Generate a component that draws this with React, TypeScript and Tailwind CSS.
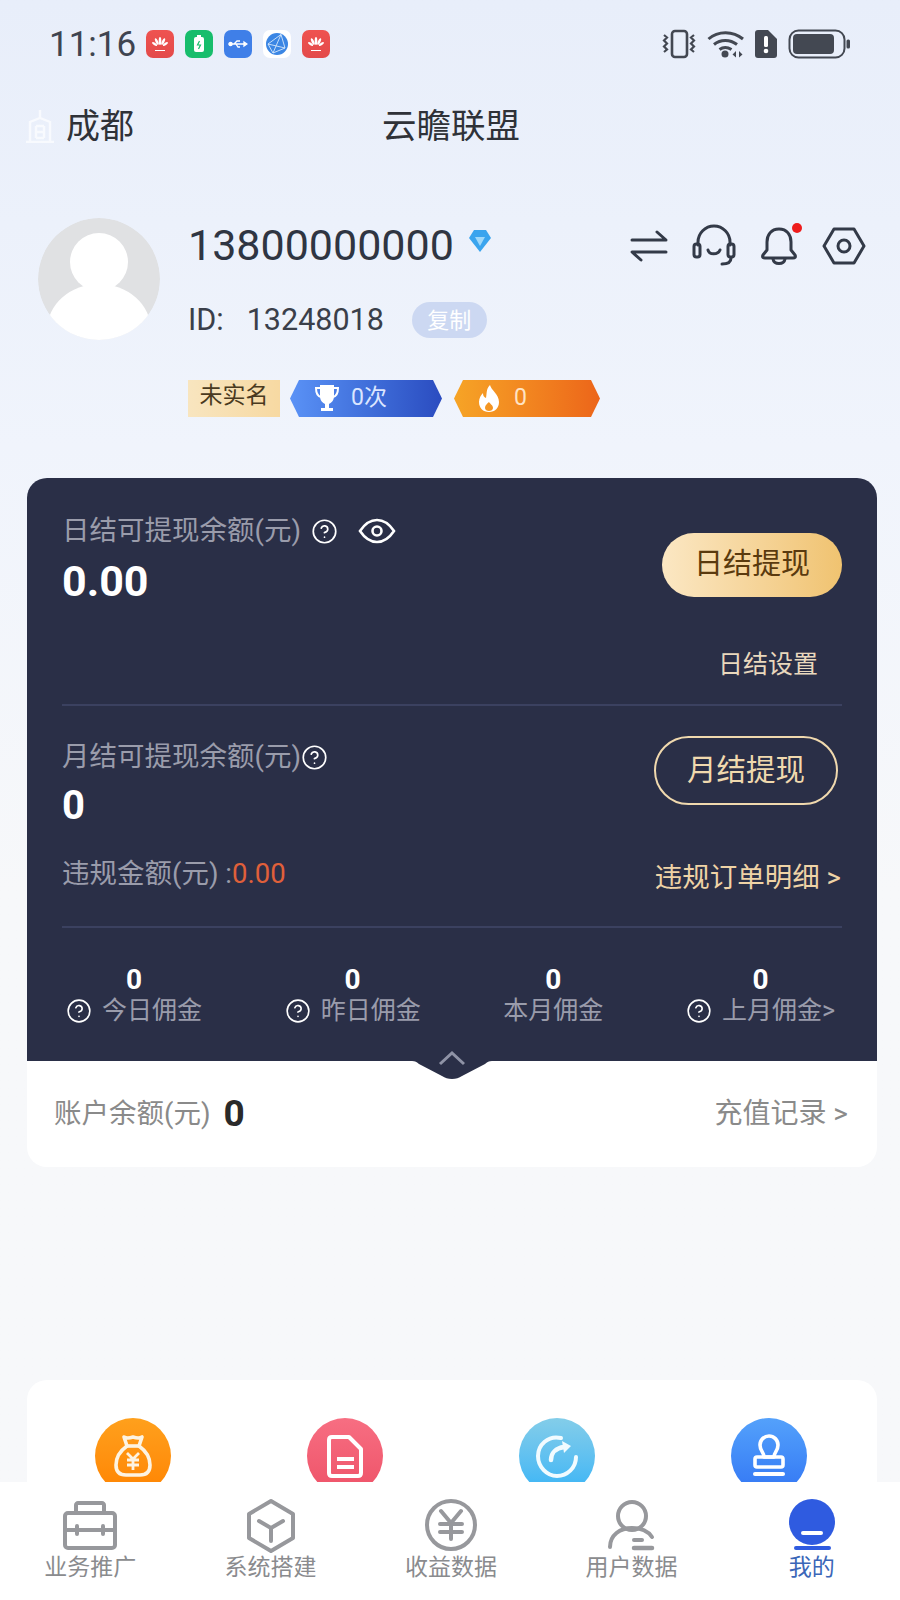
import { CircleHelp } from "lucide-react";

const Huawei = () => (
  <div className="w-[28px] h-[28px] rounded-[7px] bg-gradient-to-b from-[#ef5350] to-[#e34a4a] flex items-center justify-center">
    <svg width="20" height="20" viewBox="0 0 20 20" fill="#ffffff">
      <ellipse cx="10" cy="7" rx="1.3" ry="4" />
      <ellipse cx="6.8" cy="7.6" rx="1.3" ry="3.6" transform="rotate(-25 6.8 7.6)" />
      <ellipse cx="13.2" cy="7.6" rx="1.3" ry="3.6" transform="rotate(25 13.2 7.6)" />
      <ellipse cx="4.6" cy="10" rx="1.2" ry="3" transform="rotate(-55 4.6 10)" />
      <ellipse cx="15.4" cy="10" rx="1.2" ry="3" transform="rotate(55 15.4 10)" />
      <rect x="5" y="16" width="10" height="1" />
    </svg>
  </div>
);

const StatusApps = () => (
  <div className="flex gap-[11px] ml-[10px]">
    <Huawei />
    <div className="w-[28px] h-[28px] rounded-[7px] bg-[#17bd6c] flex items-center justify-center">
      <svg width="12" height="18" viewBox="0 0 12 18">
        <rect x="1" y="2" width="10" height="15" rx="2" fill="#ffffff" />
        <rect x="4" y="0" width="4" height="2" fill="#ffffff" />
        <path d="M6.5 6 4.5 10h3l-2 4" stroke="#17bd6c" strokeWidth="1.2" fill="none" />
      </svg>
    </div>
    <div className="w-[28px] h-[28px] rounded-[7px] bg-[#3f7fe8] flex items-center justify-center">
      <svg width="20" height="12" viewBox="0 0 20 12" fill="none" stroke="#ffffff" strokeWidth="1.3">
        <path d="M2 6h15M6 6l3-3h3M8 6l2 3h2" />
        <circle cx="2.5" cy="6" r="1.6" fill="#ffffff" />
        <path d="M16 4l3 2-3 2z" fill="#ffffff" />
      </svg>
    </div>
    <div className="w-[28px] h-[28px] rounded-[7px] bg-white flex items-center justify-center">
      <svg width="24" height="24" viewBox="0 0 24 24">
        <circle cx="12" cy="12" r="11" fill="#3b86e4" />
        <path d="M3 12 16 2.5 20 16 8 21zM3 12l17 4M16 2.5 8 21" stroke="#d6e8fb" strokeWidth="0.9" fill="none" />
      </svg>
    </div>
    <Huawei />
  </div>
);

const StatusRight = () => (
  <div className="flex items-center ml-auto">
    <svg width="36" height="30" viewBox="0 0 36 30" fill="none" stroke="#434852" strokeWidth="2.6">
      <rect x="11" y="2" width="15" height="26" rx="3" />
      <path d="M3 6l3 2.500-3 3 3 3-3 3 3 3-3 2.500M33 6l-3 2.500 3 3-3 3 3 3-3 3 3 2.500" strokeWidth="2.2" />
    </svg>
    <svg className="ml-[10px]" width="38" height="30" viewBox="0 0 38 30" fill="none" stroke="#434852" strokeWidth="3">
      <path d="M1.500 10C11 1.500 26 1.500 36 10M7 15.500c6.500-5.500 16-5.500 23 0M12.500 20.500c3.500-2.500 8-2.500 12 0" />
      <circle cx="18" cy="25" r="3.500" fill="#434852" stroke="none" />
      <path d="M29 22l-3.500 3.500 3.500 3zM32 22l3.500 3.500-3.500 3z" fill="#434852" stroke="none" />
    </svg>
    <svg className="ml-[10px]" width="22" height="28" viewBox="0 0 22 28">
      <path d="M3 0h10l9 9v16a3 3 0 0 1-3 3H3a3 3 0 0 1-3-3V3a3 3 0 0 1 3-3z" fill="#434852" />
      <rect x="9" y="6" width="4" height="11" rx="1.500" fill="#ffffff" />
      <circle cx="11" cy="21" r="2.300" fill="#ffffff" />
    </svg>
    <svg className="ml-[11px]" width="62" height="30" viewBox="0 0 62 30">
      <rect x="1.500" y="1.500" width="55" height="27" rx="9" fill="none" stroke="#434852" strokeWidth="2" />
      <rect x="5" y="5" width="41" height="20" rx="4" fill="#434852" />
      <rect x="58.500" y="10.500" width="3.500" height="9" rx="1.500" fill="#434852" />
    </svg>
  </div>
);

const ProfileIcons = () => (
  <div className="flex gap-[21px] ml-auto mt-[6px] pr-[34px]">
    <svg width="44" height="44" viewBox="0 0 44 44" fill="none" stroke="#333a48" strokeWidth="3" strokeLinecap="round" strokeLinejoin="round">
      <path d="M5 16h34l-9-8M39 28H5l9 8" />
    </svg>
    <svg width="44" height="44" viewBox="0 0 44 44" fill="none" stroke="#333a48" strokeWidth="3" strokeLinecap="round" strokeLinejoin="round">
      <path d="M6 21v-3a16 16 0 0 1 32 0v3" />
      <rect x="2" y="20" width="6" height="13" rx="2.500" />
      <rect x="36" y="20" width="6" height="13" rx="2.500" />
      <path d="M16 26c1 5 10 5 12 0M39 34c0 4-3 6-9 6" />
    </svg>
    <div className="relative w-[44px] h-[44px]">
      <svg width="44" height="44" viewBox="0 0 44 44" fill="none" stroke="#333a48" strokeWidth="3" strokeLinecap="round" strokeLinejoin="round">
        <path d="M22 5c-8 0-12 6-12 13v8l-4 5c-1 2 0 3 2 3h28c2 0 3-1 2-3l-4-5v-8c0-7-4-13-12-13z" />
        <path d="M16 35c1 6 11 6 12 0" />
      </svg>
      <div className="absolute w-[10px] h-[10px] rounded-full bg-[#ee1c1c] top-[-1px] right-[-1px]" />
    </div>
    <svg width="44" height="44" viewBox="0 0 44 44" fill="none" stroke="#333a48" strokeWidth="3" strokeLinejoin="round">
      <path d="M12 5h20l10 17-10 17H12L2 22z" />
      <circle cx="22" cy="22" r="6" />
    </svg>
  </div>
);

const Help = ({ size = 27 }: { size?: number }) => (
  <CircleHelp size={size} color="#ffffff" strokeWidth={1.5} />
);

const Stat = ({ label, help }: { label: string; help?: boolean }) => (
  <div className="flex flex-col items-center">
    <div className="h-[32px] leading-[32px] text-[28px] font-bold text-white">0</div>
    <div className="h-[30px] flex items-center gap-[10px] text-[25px] text-[#9a9cab]">
      {help && <Help size={26} />}
      <span>{label}</span>
    </div>
  </div>
);

const WalletCard = () => (
  <div className="ml-[27px] mr-[23px] mt-[61px]">
    <div className="relative bg-[#2a2f47] rounded-t-[20px] h-[583px] px-[35px]">
      <div className="h-[228px] border-b-2 border-[#3b4160]">
        <div className="flex justify-between pt-[37px]">
          <div>
            <div className="h-[32px] flex items-center text-[27.5px] text-[#9a9cab]">
              <span>日结可提现余额(元)</span>
              <span className="ml-[10px]"><Help /></span>
              <svg className="ml-[20px]" width="38" height="26" viewBox="0 0 38 26" fill="none" stroke="#ffffff" strokeWidth="2.600">
                <path d="M2 13C8 4 14 2 19 2s11 2 17 11c-6 9-12 11-17 11S8 22 2 13z" />
                <circle cx="19" cy="13" r="4.500" />
              </svg>
            </div>
            <div className="h-[56px] mt-[6px] leading-[56px] text-[43px] font-bold text-white">0.00</div>
          </div>
          <div className="w-[180px] h-[64px] mt-[18px] rounded-full bg-gradient-to-r from-[#fbe7c3] to-[#f0c370] flex items-center justify-center text-[29px] text-[#5a3a0e]">
            日结提现
          </div>
        </div>
        <div className="mt-[39px] h-[34px] leading-[34px] text-right pr-[24px] text-[25px] text-[#e9d8bd]">日结设置</div>
      </div>

      <div className="h-[222px] border-b-2 border-[#3b4160]">
        <div className="flex justify-between">
          <div className="pt-[35px]">
            <div className="h-[32px] flex items-center text-[27.5px] text-[#9a9cab]">
              <span>月结可提现余额(元)</span>
              <Help />
            </div>
            <div className="h-[44px] mt-[11px] leading-[44px] text-[40px] font-bold text-white">0</div>
          </div>
          <div className="w-[184px] h-[69px] mt-[30px] mr-[4px] rounded-full border-2 border-[#f0d9ae] flex items-center justify-center text-[29.5px] text-[#f0d9ae]">
            月结提现
          </div>
        </div>
        <div className="flex justify-between items-start mt-[31px]">
          <div className="h-[30px] leading-[30px] text-[27.5px] text-[#9a9cab]">
            违规金额(元) :<span className="text-[#e0603a]">0.00</span>
          </div>
          <div className="h-[30px] leading-[30px] mt-[4px] mr-[1px] text-[27.5px] text-[#efd3a6]">违规订单明细 &gt;</div>
        </div>
      </div>

      <div className="flex justify-between pl-[4px] pr-[7px] pt-[36px]">
        <Stat label="今日佣金" help />
        <Stat label="昨日佣金" help />
        <Stat label="本月佣金" />
        <Stat label="上月佣金>" help />
      </div>

      <svg className="absolute left-[385px] bottom-[-18px]" width="80" height="18" viewBox="0 0 80 18">
        <path d="M0 0h80c-3 0-5 1-7 3L50 15c-3 2-6 3-10 3s-7-1-10-3L7 3C5 1 3 0 0 0z" fill="#2a2f47" />
      </svg>
      <svg className="absolute left-[411px] bottom-[-6px]" width="28" height="18" viewBox="0 0 28 18" fill="none" stroke="#8f93a6" strokeWidth="3">
        <path d="M2 15 14 4l12 11" />
      </svg>
    </div>
    <div className="bg-white rounded-b-[20px] h-[106px] pl-[27px] pr-[29px] flex items-center justify-between">
      <div className="flex items-center">
        <span className="text-[27.5px] text-[#8a8a8a]">账户余额(元)</span>
        <span className="ml-[13px] text-[37px] font-bold text-[#2a2a2a]">0</span>
      </div>
      <span className="text-[28px] text-[#8a8a8a]">充值记录 &gt;</span>
    </div>
  </div>
);

const tools = [
  {
    bg: "bg-gradient-to-b from-[#ffa01c] to-[#ff8400]",
    icon: (
      <svg width="50" height="50" viewBox="0 0 50 50" fill="none" stroke="#fdf3e2" strokeWidth="3.600" strokeLinejoin="round">
        <path d="M16 6c3 2 6 1 9 0 3 1 6 2 9 0l-3 9c7 5 11 12 11 19 0 7-4 10-10 10H18c-6 0-10-3-10-10 0-7 4-14 11-19z" />
        <path d="M19 15h12" />
        <path d="M19 22l6 6 6-6M25 28v11M19 29h12M19 34h12" strokeWidth="2.800" />
      </svg>
    ),
  },
  {
    bg: "bg-gradient-to-b from-[#f76e82] to-[#ee5268]",
    icon: (
      <svg width="50" height="50" viewBox="0 0 50 50" fill="none" stroke="#ffffff" strokeWidth="4" strokeLinejoin="round">
        <path d="M12 6h17l12 12v24c0 2-1 3-3 3H12c-2 0-3-1-3-3V9c0-2 1-3 3-3z" />
        <path d="M17 28h17M17 36h17" />
      </svg>
    ),
  },
  {
    bg: "bg-gradient-to-b from-[#83cde9] to-[#35b4f6]",
    icon: (
      <svg width="50" height="50" viewBox="0 0 50 50" fill="none" stroke="#f1fbff" strokeWidth="4" strokeLinecap="round">
        <path d="M29 7C16 4 6 14 6 25c0 11 9 20 19 20s19-8 19-19" />
        <path d="M19 29c0-7 5-12 13-13" strokeWidth="4.500" />
        <path d="M30 10l9 5-7 7z" fill="#f1fbff" stroke="none" />
      </svg>
    ),
  },
  {
    bg: "bg-gradient-to-b from-[#54a1fb] to-[#3476f4]",
    icon: (
      <svg width="50" height="50" viewBox="0 0 50 50" fill="none" stroke="#ffffff" strokeWidth="3.600" strokeLinejoin="round">
        <path d="M20 26c0-5-4-6-4-12a9 9 0 0 1 18 0c0 6-4 7-4 12z" />
        <rect x="11" y="26" width="28" height="10" rx="2" />
        <path d="M11 43h28" strokeWidth="4" strokeLinecap="round" />
      </svg>
    ),
  },
];

const tabs = [
  {
    label: "业务推广",
    icon: (
      <svg width="56" height="56" viewBox="0 0 56 56" fill="none" stroke="#97989c" strokeWidth="4" strokeLinejoin="round">
        <rect x="3" y="16" width="50" height="35" rx="3" />
        <path d="M14 16V8c0-1 1-2 2-2h24c1 0 2 1 2 2v8" />
        <path d="M3 33h50" />
        <path d="M15 29v8M41 29v8" strokeLinecap="round" />
      </svg>
    ),
  },
  {
    label: "系统搭建",
    icon: (
      <svg width="56" height="56" viewBox="0 0 56 56" fill="none" stroke="#97989c" strokeWidth="4" strokeLinejoin="round" strokeLinecap="round">
        <path d="M28 4l22 13v24L28 54 6 41V17z" />
        <path d="M16 24l12 7 12-7M28 31v13" />
      </svg>
    ),
  },
  {
    label: "收益数据",
    icon: (
      <svg width="56" height="56" viewBox="0 0 56 56" fill="none" stroke="#97989c" strokeWidth="4" strokeLinecap="round" strokeLinejoin="round">
        <circle cx="28" cy="28" r="24" />
        <path d="M18 14l10 12 10-12M28 26v16M17 27h22M17 35h22" />
      </svg>
    ),
  },
  {
    label: "用户数据",
    icon: (
      <svg width="56" height="56" viewBox="0 0 56 56" fill="none" stroke="#97989c" strokeWidth="4" strokeLinecap="round">
        <circle cx="29" cy="19" r="14" />
        <path d="M7 50c0-12 10-19 22-19 9 0 16 3 20 9" />
        <path d="M31 43h8" />
        <path d="M31 51h18" strokeWidth="4.500" />
      </svg>
    ),
  },
  {
    label: "我的",
    active: true,
    icon: (
      <svg width="56" height="56" viewBox="0 0 56 56" fill="none">
        <circle cx="28" cy="25" r="23" fill="#2f5be0" />
        <path d="M19 36h18" stroke="#ffffff" strokeWidth="4" strokeLinecap="round" />
        <path d="M12 51h33" stroke="#2f5be0" strokeWidth="4" strokeLinecap="round" />
      </svg>
    ),
  },
];

export default function App() {
  return (
    <div className="w-[900px] h-[1600px] flex flex-col overflow-hidden font-['Roboto','Noto_Sans_CJK_SC',sans-serif]">
      <div className="flex-1 overflow-hidden bg-gradient-to-b from-[#e8eefa] via-[#f0f4fc] via-30% to-[#f7f8fa] to-60%">
        <div className="h-[88px] pl-[49px] pr-[50px] flex items-center">
          <span className="text-[35px] text-[#3f4450] pt-[3px]">11:16</span>
          <StatusApps />
          <StatusRight />
        </div>

        <div className="h-[76px] pl-[26px] pr-[24px] grid grid-cols-[1fr_auto_1fr] items-center">
          <div className="flex items-center gap-[12px]">
            <svg width="28" height="34" viewBox="0 0 28 34" fill="none" stroke="#f8fafe" strokeWidth="2.400">
              <path d="M0 33h28M4 33V13l10-4 10 4v20M14 9V1M10 17h8M10 23h8M10 29h8M10 17v12M18 17v12" />
            </svg>
            <span className="text-[34px] leading-none text-[#2f3238]">成都</span>
          </div>
          <span className="text-[34.5px] leading-none text-[#2f3238]">云瞻联盟</span>
          <div />
        </div>

        <div className="mt-[54px] h-[199px] flex items-start">
          <svg className="ml-[38px] mr-[28px]" width="122" height="122" viewBox="0 0 122 122">
            <defs>
              <clipPath id="avatar-clip"><circle cx="61" cy="61" r="61" /></clipPath>
            </defs>
            <g clipPath="url(#avatar-clip)">
              <circle cx="61" cy="61" r="61" fill="#e0e1e3" />
              <circle cx="61" cy="44" r="29" fill="#ffffff" />
              <ellipse cx="61" cy="112" rx="52" ry="46" fill="#ffffff" />
            </g>
          </svg>
          <div>
            <div className="h-[54px] flex items-center">
              <span className="text-[43px] leading-none text-[#2f3542]">13800000000</span>
              <svg className="ml-[14px] mb-[8px]" width="24" height="24" viewBox="0 0 24 24">
                <path d="M6 1h12l5 8-11 14L1 9z" fill="#3aa4ee" />
                <path d="M7 8h10l-5 9z" fill="#9fd8fa" />
              </svg>
            </div>
            <div className="mt-[28px] h-[40px] flex items-center text-[30.5px] text-[#3a3f4a]">
              <span>ID:</span>
              <span className="ml-[23px]">13248018</span>
              <span className="ml-[28px] w-[75px] h-[36px] rounded-full bg-[#ccd8f2] text-white text-[22px] flex items-center justify-center">复制</span>
            </div>
            <div className="mt-[40px] flex items-center text-[23px]">
              <div className="w-[92px] h-[37px] bg-gradient-to-r from-[#f8e5bf] to-[#f7d9a2] text-[#4a3a20] flex items-center justify-center pb-[4px]">未实名</div>
              <div className="ml-[10px] w-[152px] h-[37px] pl-[25px] gap-[12px] flex items-center text-[#dbe6ff] bg-gradient-to-r from-[#5a92f6] to-[#2b4cc0] [clip-path:polygon(0_50%,9px_0,calc(100%-9px)_0,100%_50%,calc(100%-9px)_100%,9px_100%)]">
                <svg width="24" height="30" viewBox="0 0 24 30" fill="#ffffff">
                  <path d="M5 1h14v11c0 5-3 7-5 8v4h4v3H6v-3h4v-4c-2-1-5-3-5-8z" />
                  <path d="M5 4H1c0 5 1 8 5 9M19 4h4c0 5-1 8-5 9" fill="none" stroke="#ffffff" strokeWidth="2" />
                </svg>
                <span>0次</span>
              </div>
              <div className="ml-[12px] w-[146px] h-[37px] pl-[23px] gap-[13px] flex items-center text-[#ffe3c4] bg-gradient-to-r from-[#f6a426] to-[#ec651a] [clip-path:polygon(0_50%,9px_0,calc(100%-9px)_0,100%_50%,calc(100%-9px)_100%,9px_100%)]">
                <svg width="24" height="28" viewBox="0 0 24 28" fill="#ffffff">
                  <path d="M13 0c1 5 9 9 9 17 0 6-4 10-10 10S2 23 2 17c0-4 2-7 4-9 0 3 1 4 3 5 1-5 0-9 4-13zM12 17c-2 2-4 3-4 6 0 2 2 3 4 3s4-1 4-3c0-3-3-4-4-6z" fillRule="evenodd" />
                </svg>
                <span>0</span>
              </div>
            </div>
          </div>
          <ProfileIcons />
        </div>

        <WalletCard />

        <div className="ml-[27px] mr-[23px] pr-[2px] mt-[213px] h-[200px] bg-white rounded-t-[20px] grid grid-cols-4 pt-[38px]">
          {tools.map((tool, i) => (
            <div key={i} className="flex justify-center">
              <div className={`w-[76px] h-[76px] rounded-full flex items-center justify-center ${tool.bg}`}>
                {tool.icon}
              </div>
            </div>
          ))}
        </div>
      </div>

      <div className="w-[902px] h-[118px] bg-white grid grid-cols-5 pt-[15px]">
        {tabs.map((tab) => (
          <div key={tab.label} className="flex flex-col items-center">
            {tab.icon}
            <span className={`h-[30px] leading-[30px] text-[23px] ${tab.active ? "text-[#3a66b8]" : "text-[#8a8b8e]"}`}>
              {tab.label}
            </span>
          </div>
        ))}
      </div>
    </div>
  );
}
